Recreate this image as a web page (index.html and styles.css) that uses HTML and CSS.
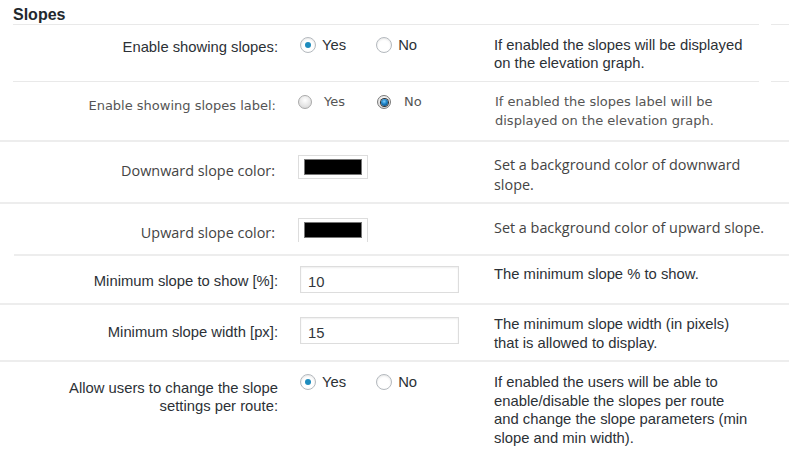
FILE: index.html
```html
<!DOCTYPE html>
<html>
<head>
<meta charset="utf-8">
<link rel="stylesheet" href="styles.css">
</head>
<body>
<div class="page">
  <h2 class="title sep-gap">Slopes</h2>

  <div class="row r1 sep-gap">
    <div class="label">Enable showing slopes:</div>
    <div class="ctrl">
      <span class="opt"><span class="radio on"></span>Yes</span>
      <span class="opt"><span class="radio"></span>No</span>
    </div>
    <div class="desc">If enabled the slopes will be displayed<br>on the elevation graph.</div>
  </div>

  <div class="row r2 sep-full">
    <div class="label">Enable showing slopes label:</div>
    <div class="ctrl">
      <span class="opt old"><span class="oradio"></span>Yes</span>
      <span class="opt old"><span class="oradio on"></span>No</span>
    </div>
    <div class="desc">If enabled the slopes label will be<br>displayed on the elevation graph.</div>
  </div>

  <div class="row r3 sep-full">
    <div class="label">Downward slope color:</div>
    <div class="ctrl"><span class="swatch"><span class="chip"></span></span></div>
    <div class="desc">Set a background color of downward<br>slope.</div>
  </div>

  <div class="row r4 sep-inset">
    <div class="label">Upward slope color:</div>
    <div class="ctrl"><span class="swatch cut"><span class="chip"></span></span></div>
    <div class="desc">Set a background color of upward slope.</div>
  </div>

  <div class="row r5 sep-full">
    <div class="label">Minimum slope to show [%]:</div>
    <div class="ctrl"><span class="field">10</span></div>
    <div class="desc">The minimum slope % to show.</div>
  </div>

  <div class="row r6 sep-full">
    <div class="label">Minimum slope width [px]:</div>
    <div class="ctrl"><span class="field">15</span></div>
    <div class="desc">The minimum slope width (in pixels)<br>that is allowed to display.</div>
  </div>

  <div class="row r7">
    <div class="label">Allow users to change the slope<br>settings per route:</div>
    <div class="ctrl">
      <span class="opt"><span class="radio on"></span>Yes</span>
      <span class="opt"><span class="radio"></span>No</span>
    </div>
    <div class="desc">If enabled the users will be able to<br>enable/disable the slopes per route<br>and change the slope parameters (min<br>slope and min width).</div>
  </div>
</div>
</body>
</html>
```

FILE: styles.css
```css
html, body {
  margin: 0;
  padding: 0;
  background: #ffffff;
}

.page {
  width: 789px;
  height: 449px;
  overflow: hidden;
  font-family: "Liberation Sans", Arial, sans-serif;
  font-size: 14.8px;
  color: #2c3136;
}

.title {
  margin: 0;
  height: 25px;
  box-sizing: border-box;
  padding: 5px 0 0 13px;
  font-size: 16px;
  line-height: 19px;
  font-weight: bold;
  color: #23282d;
}

/* separators */
.sep-gap {
  background:
    linear-gradient(#e9e9e9, #e9e9e9) no-repeat 13px 100% / 746px 1px,
    linear-gradient(#e9e9e9, #e9e9e9) no-repeat 771px 100% / 18px 1px;
}
.sep-full {
  background: linear-gradient(#ededed, #ededed) no-repeat 0 100% / 100% 2px;
}
.sep-inset {
  background: linear-gradient(#ededed, #ededed) no-repeat 14px 100% / calc(100% - 14px) 2px;
}

.row {
  display: flex;
  box-sizing: border-box;
}

.label {
  width: 278px;
  flex: none;
  text-align: right;
  line-height: 18px;
  white-space: nowrap;
}

.ctrl {
  flex: none;
  width: 194px;
  margin-left: 22px;
  display: flex;
  align-items: flex-start;
}

.desc {
  flex: none;
  white-space: nowrap;
}

/* row 1 */
.r1 { height: 57px; }
.r1 .label { padding-top: 13px; }
.r1 .ctrl { padding-top: 12px; }
.r1 .desc { padding-top: 11px; line-height: 18px; }

/* row 2 (older theme styling) */
.r2 {
  height: 60px;
  font-family: "DejaVu Sans", Verdana, sans-serif;
  font-size: 13px;
  color: #555555;
}
.r2 .label { width: 276px; padding-top: 14px; line-height: 19px; }
.r2 .ctrl { padding-top: 13px; width: 197px; }
.r2 .desc { padding-top: 10px; line-height: 19px; }

/* rows 3 + 4 */
.r3, .r4 {
  font-family: "Open Sans", "Noto Sans", sans-serif;
  font-size: 14.4px;
  color: #444444;
}
.r3 { height: 62px; }
.r3 .label { width: 275px; padding-top: 19px; line-height: 20px; }
.r3 .ctrl { padding-top: 13px; margin-left: 23px; width: 196px; }
.r3 .desc { padding-top: 13px; line-height: 20px; }
.r4 { height: 52px; }
.r4 .label { width: 275px; padding-top: 19px; line-height: 20px; }
.r4 .ctrl { padding-top: 14px; margin-left: 23px; width: 196px; }
.r4 .desc { padding-top: 14px; line-height: 20px; }

/* row 5 + 6 */
.r5 { height: 49px; }
.r5 .label { padding-top: 16px; }
.r5 .ctrl { padding-top: 10px; }
.r5 .desc { padding-top: 9px; line-height: 18px; }
.r6 { height: 57px; }
.r6 .label { padding-top: 18px; }
.r6 .ctrl { padding-top: 12px; }
.r6 .desc { padding-top: 10px; line-height: 19px; }

/* row 7 */
.r7 { height: 87px; }
.r7 .label { padding-top: 17px; }
.r7 .ctrl { padding-top: 12px; }
.r7 .desc { padding-top: 11px; line-height: 18.5px; }

/* radio options */
.opt {
  display: inline-flex;
  align-items: center;
  line-height: 16px;
  margin-right: 30px;
}
.opt:last-child { margin-right: 0; }

.radio {
  width: 14px;
  height: 14px;
  border: 1px solid #b4b9be;
  border-radius: 50%;
  background: #ffffff;
  box-shadow: inset 0 1px 2px rgba(0, 0, 0, 0.1);
  margin-right: 6px;
  display: inline-flex;
  align-items: center;
  justify-content: center;
  flex: none;
}
.radio.on::before {
  content: "";
  width: 6px;
  height: 6px;
  border-radius: 50%;
  background: #1e8cbe;
}

.opt.old { margin-right: 32px; line-height: 14px; }
.opt.old:last-child { margin-right: 0; }
.oradio {
  width: 12px;
  height: 12px;
  border: 1px solid #a9a9a9;
  border-radius: 50%;
  background: radial-gradient(circle at 50% 35%, #ffffff 0%, #e4e4e4 60%, #cfcfcf 100%);
  margin-right: 12px;
  display: inline-flex;
  align-items: center;
  justify-content: center;
  flex: none;
}
.oradio.on {
  border-color: #7a7a7a;
  margin-right: 13px;
}
.oradio.on::before {
  content: "";
  width: 7px;
  height: 7px;
  border-radius: 50%;
  background: radial-gradient(circle at 45% 35%, #7fd0ff 0%, #1a7fc4 45%, #06375e 100%);
  box-shadow: 0 0 0 1px #333;
}

/* color swatch */
.swatch {
  display: inline-block;
  width: 70px;
  height: 24px;
  box-sizing: border-box;
  border: 1px solid #dddddd;
  padding: 3px 5px;
  background: #ffffff;
}
.swatch.cut { border-bottom: none; }
.chip {
  display: block;
  width: 58px;
  height: 16px;
  box-sizing: border-box;
  border: 1px solid #777777;
  background: #000000;
}

/* text field */
.field {
  display: block;
  width: 159px;
  height: 27px;
  box-sizing: border-box;
  border: 1px solid #dddddd;
  box-shadow: inset 0 1px 2px rgba(0, 0, 0, 0.07);
  padding: 6px 7px 0;
  line-height: 18px;
  color: #32373c;
  background: #ffffff;
}
```
